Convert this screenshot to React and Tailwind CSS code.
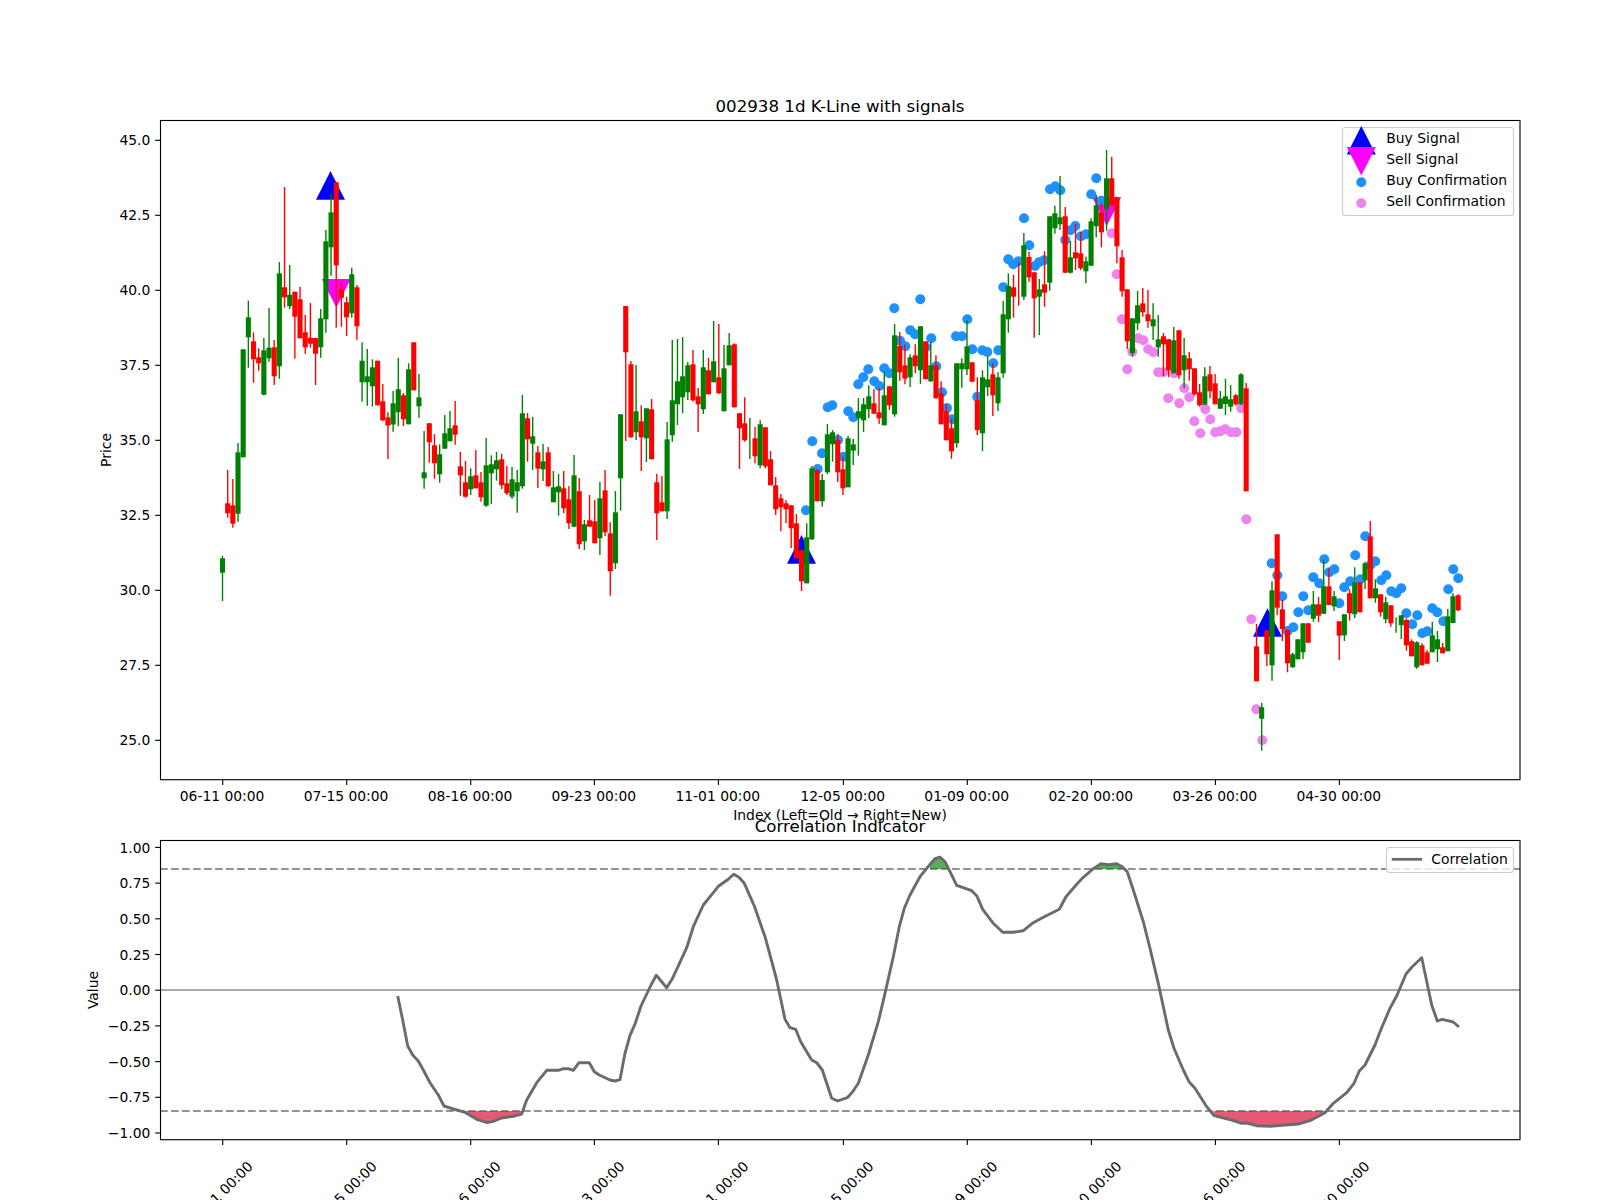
import React from "react";

const X = (i) => 222.5 + 5.17 * i;
// [green?, wickTop, bodyTop, bodyBottom, wickBottom], one row per bar
const C = [
[1,556,558.3,572.7,601],[0,470,503.3,513.3,517.7],[0,479,505.3,523.7,527.7],[1,443,452.3,513.7,521.7],[1,349.3,349.3,457.3,457.3],
[1,300.7,317.3,337.3,367.7],[0,332.3,341.3,359.3,382.7],[0,348.3,357.3,363.3,370.7],[1,338,350.3,394.7,395.3],[1,308,347.7,358.3,361.7],
[0,340,347.3,376.3,385],[1,262,273.3,366.3,378.7],[0,187,287.3,297.3,307.7],[1,265,294.7,306.3,309],[0,291.7,291.7,316.7,358.7],
[0,286.7,299.3,338.3,338.3],[0,315,332.3,347.3,353.7],[0,303,337.7,343.7,347.7],[0,338,338,353.7,385],[1,309,318.3,347.3,357.7],
[1,230,241.3,319.3,332.7],[1,194,212.3,247.3,275.7],[0,182,182.3,265.3,327.7],[0,281.7,289.3,297.7,326.7],[0,296.7,302.3,317.3,336],
[1,267.7,274.3,313.3,317.7],[0,285,287.3,326.3,339.7],[1,342.3,360.7,382.3,401.7],[1,349,376.3,382.3,405.7],[1,359.3,367.3,386.3,406.7],
[0,360.7,360.7,405.3,405.3],[0,384,401.3,420.3,421],[0,412.3,417.3,425.5,459],[1,391,403.3,424.5,431.8],[1,357.7,389.3,412.3,426],
[0,393,395.3,419.3,426],[1,363.3,369.3,424.3,424.3],[0,342.3,342.3,390.3,390.3],[1,374,397.3,406.3,417.7],[1,431,472.3,478.3,488.7],
[0,423,423.3,442.3,462.7],[0,434,445.3,463.3,478.7],[1,444.3,454.3,474.3,482.7],[1,415,433.3,448.7,448.7],[1,411,428.3,441.3,441.3],
[0,401,425.3,434.7,444.7],[0,452,466.3,475.3,495.7],[0,461,482.3,496.7,497.7],[1,468.3,476.3,489.3,495],[0,450,475.3,488.3,488.3],
[0,472,482.3,497.3,501.7],[1,438,465.3,505.7,506.7],[1,455.3,464.3,473.3,504],[1,452,460.3,469.3,480.7],[0,453.7,459.3,485.3,489],
[0,466,483.3,493.3,495],[1,467,479.3,496.7,499],[1,470,482.3,491.3,512.7],[1,395,413.3,486.3,488.7],[0,413,418.3,439.3,461.7],
[1,417,436.3,443.7,470],[0,446,452.3,468.7,488],[1,444,461.3,469.3,481],[0,447,452.3,486.3,486.7],[1,471,487.3,502.3,502.3],
[1,474,486.3,492.3,515.7],[0,471,488.3,508.3,513.3],[0,486,499.3,523.3,529],[1,455,475.3,526.7,527.3],[0,478,491.3,544.3,549],
[1,520,524.3,541.3,550],[0,495,520.3,526.7,526.7],[0,500,521.3,543.3,543.3],[1,482,498.3,538.3,555],[0,470,490.3,532.3,536],
[0,522.3,533.3,571.3,595.7],[1,491,512.3,563.3,569],[1,414.3,414.3,478.3,510.7],[0,306,306,352.3,441],[0,361,364.3,437.3,437.7],
[1,365,411.3,432.3,440],[0,405.3,421.3,437.3,471],[1,408.3,408.3,438.3,462],[0,399,409.3,459.3,459.3],[0,474,482.3,513.3,540],
[0,476,502.3,511.3,511.3],[1,422,439.3,511.3,519],[1,340,400.3,435.3,441.7],[1,339,381.3,404.3,425],[1,337,376.3,397.3,413.3],
[1,362,365.3,392.3,400],[0,350,364.3,400.3,401.7],[0,388,396.3,404.3,432],[1,350,367.3,409.3,414],[0,358,370.3,394.3,394.3],
[1,321,361.3,382.3,382.3],[0,324,377.3,393.3,394],[1,345,368.3,411.3,411.3],[1,333,345.3,365.3,365.3],[0,343.3,344.3,407.3,407.3],
[0,413,413.3,428.3,469],[0,397.3,423.3,440.3,441.7],[1,418,450,450,459],[0,427,438.3,456.3,463.3],[1,420.3,424.3,465.3,468.3],
[0,427.3,427.3,466.3,468.3],[0,451,459.3,485.3,485.3],[0,477,485.3,509.3,515],[0,494,498.3,507.3,531.3],[0,500.3,503.3,509.3,523.3],
[0,505.3,505.3,528.3,548],[0,514,523.3,558.3,558.3],[0,550.3,550.3,581.3,591],[1,523.3,537.3,583.3,583.3],[1,466,468.3,539.3,540],
[0,468.7,470,501.3,501.3],[1,474,480,501.3,506.7],[1,424,434.3,472.3,474],[1,430,432.3,444.3,461.7],[0,434,440,472.3,482],
[0,456.7,469.3,488.3,495],[1,436,438.3,487.3,487.3],[1,439,444.3,450.7,465],[1,398,411.3,418.3,455.7],[1,398,404.3,420.3,432],
[1,385.3,396.3,409.3,418],[0,389.3,403.3,413.7,413.7],[0,388,412.3,418.3,424],[1,371.3,395.3,425.3,425.3],[0,386.3,386.3,405.3,410],
[1,324,335.3,414.3,416.7],[0,332,346,372.3,381],[0,344.3,365.3,378.7,384.3],[1,354.3,357.3,377.3,387],[0,344.3,355.3,366.3,373],
[1,326,326.3,370.3,384],[0,341.3,341.3,379.3,379.3],[1,342.3,365.3,381.3,381.7],[0,355.3,365.3,398.3,398.3],[0,381.3,393.3,424.3,424.3],
[0,404.3,411.3,440.3,440.3],[0,418.3,428.3,451.3,458.7],[1,363.3,363.3,443.3,447.7],[1,358.3,363.3,369.3,387.7],[1,320,346.3,369.3,375],
[0,362.3,362.3,381.7,381.7],[0,377.3,400.3,430,435],[1,370.3,377.3,433.3,451],[1,356.3,379.3,387.3,396],[0,363.3,374.3,395.3,416],
[1,372.3,377.3,403.3,411],[1,301,314.3,373.3,377.7],[1,273.3,286,319.3,332.7],[0,274.7,287.3,296.7,317.7],[0,262,290,290,305.7],
[1,233,245.3,296.7,300],[0,251.7,257,277.3,281.7],[0,272.3,272.3,298.3,337.7],[1,279,289.3,296.7,335],[0,251.3,284.3,292.7,306.7],
[1,216.3,216.3,282.7,290.7],[1,205.7,213.3,228.3,233.7],[1,176,217.3,224.3,230],[0,207,216.3,272.7,273.3],[1,241,257.3,272.7,273.7],
[0,224,252.3,258.3,270],[0,232,253.3,268.3,270],[1,256.7,261.3,271.3,283.3],[1,218.3,221.3,265.7,266],[1,195,205.3,226.3,237.3],
[0,203.3,212.3,232.3,247.3],[1,150,178.3,209.3,230.7],[0,156.7,178.3,205.3,205.3],[0,197.3,197.3,246.3,263.3],[0,250,257.3,291.3,296.7],
[0,289.3,289.3,341.3,349],[1,318.3,318.3,353.3,356.7],[1,291,305.3,323.3,330],[0,288,303.3,312.3,316.7],[0,290,314.3,321.3,327.7],
[1,303.3,319.3,326.3,340],[1,315,339.3,347.3,356.7],[0,333,336.3,344.3,376],[0,339,339.3,370.3,377.3],[1,327,340.3,373.3,373.3],
[0,330.3,330.3,375.3,378.7],[1,338,355.3,370.3,388.3],[0,352,358.3,369.3,380.7],[0,368.3,368.3,394.3,395.7],[0,384,392.3,405.3,406.7],
[1,367.3,376.3,404.7,404.7],[0,366,374.3,391.3,398.3],[0,374,383.3,404.3,404.3],[1,391,398.3,408.7,408.7],[1,379,396.3,404,415],
[1,385,399.3,406.7,411.7],[0,394,395.3,404.3,405.7],[1,373.3,374.3,404.3,405],[0,383,388.3,491.3,491.3],null,
[0,624,646.3,681.3,681.3],[1,703,707.3,718.7,750.7],[0,630.3,630.3,654.3,666],[1,581.3,590.3,665.3,680.7],[0,534.3,534.3,607.7,615],
[0,600,609.3,629,641],[0,629.3,630,663.3,672.3],[1,653,654.3,667.3,667.7],[1,639.3,639.3,659.3,659.3],[1,623.3,623.3,652.3,659],
[0,623.3,623.3,642.7,642.7],[1,591,604.3,618.7,621.7],[0,597,604.3,615.7,622],[1,560,586.3,613.7,614],[0,568.3,586.3,605,605],
[1,591,596.3,606.3,611],[0,621.3,621.3,635.7,660],[1,614.3,614.3,635.3,641],[0,589,593.3,613.3,620.7],[1,567.3,582.3,614.3,618],
[0,582.3,582.3,612.3,612.3],[1,561.7,563.3,580.3,589],[0,521,536.3,598.3,598.3],[1,579.3,588.3,598.3,602.7],[0,594.3,594.3,612.3,616.7],
[1,597,602.3,619.3,623.3],[0,605.3,605.3,623.3,626.7],[1,617.3,625,625,632.7],[1,615.3,615.3,625.3,639],[0,618.3,620,645.3,650.7],
[0,639.3,641.3,656.3,656.3],[1,641.3,642.3,667.3,668.7],[0,643.3,645.3,665.3,665.3],[0,650,652.3,663.7,663.7],[1,622,635.3,652.3,652.3],
[1,631,639.3,649.3,662],[0,643,647.3,653.3,653.3],[1,609,616.3,651.3,651.3],[1,593.3,596.3,623,623.3],[0,594.3,595.3,610.3,611],
];
const BLUE = [[806,510.3],[812.3,441.3],[817.7,469],[822,453.3],[827.7,407.3],[832.3,405.3],[838,440],[843.3,456.7],[848.3,411.3],[853.3,417.3],[858.3,384.3],[863.3,377.3],[868.3,369.3],[874.3,381.3],[879.3,386],[884.3,368.3],[889.3,373.3],[894.3,308.3],[900,340.7],[905.3,346.3],[910.3,330.3],[915,334.3],[920.3,299.3],[925.7,347.3],[931.3,338.3],[936.3,366.3],[942,392.3],[947,408],[952,419.3],[956,336.3],[962,336.3],[967.3,319.3],[972.3,349.3],[977.3,396.7],[982.3,350.3],[987.3,352],[993.3,363.3],[998.3,350.3],[1003.3,287.3],[1008.3,259.3],[1013.3,264.3],[1018.3,261.3],[1024,218.3],[1029.3,245.3],[1035,266],[1039,262.3],[1044,260.3],[1050,189.3],[1055.3,186.3],[1060.3,190.3],[1065.3,240],[1070.3,230.3],[1075.3,226],[1081,236.3],[1086,234.3],[1091.3,194.3],[1096.3,178.3],[1101.3,200.7],[1271.7,563.3],[1277.3,575.3],[1282.3,596.3],[1287.7,631],[1293.3,627.3],[1298.3,612.3],[1303.3,596.3],[1308.3,610.3],[1313.3,577.3],[1319.3,583.3],[1324.3,559.3],[1329.3,572.3],[1334.3,569.3],[1339.3,603.3],[1344.3,587.3],[1350.3,581.3],[1355.3,555.3],[1360.3,579.3],[1365.3,536.3],[1370.3,565.3],[1375.3,561.3],[1381.3,580.3],[1386.3,575.3],[1391.3,591.3],[1396.3,593.3],[1401.3,588.3],[1406.3,613.3],[1412.3,624.3],[1417.3,615.3],[1422.3,633.3],[1427.3,631.3],[1432.3,608.3],[1437.3,612.3],[1443.3,621.3],[1448.3,589.3],[1453.3,569.3],[1458.3,578.3]];
const VIOLET = [[1111.7,233.3],[1116.7,274.3],[1122,319.3],[1127.3,369.3],[1132.3,351.7],[1138,338.3],[1143.3,340.3],[1148.3,349.3],[1153.3,352.3],[1158.3,372.3],[1163.3,372.3],[1168.3,398.3],[1174.3,373.3],[1179.3,403.3],[1184.3,388.3],[1189.3,397.3],[1194.3,421.3],[1200.3,433.3],[1205.3,409.3],[1210.3,419.3],[1215.3,432.3],[1220.3,431.3],[1225.3,429.3],[1231.3,432.3],[1236.3,432.3],[1241.3,408.3],[1246.3,519.3],[1251.3,619.3],[1256.3,709.3],[1262.3,740.3]];

const LINE7 = [[953,678],[968,750],[983,828],[998,855],[1015,873],[1030,900],[1050,938],[1075,975],[1092,1008],[1120,1017],[1155,1027],[1190,1048],[1222,1058],[1240,1054],[1265,1044],[1300,1039],[1325,1032],[1340,990],[1370,938],[1400,901],[1435,901],[1450,896],[1465,896],[1480,901],[1497,878]];
const LINE8 = [[88,878],[103,905],[118,915],[150,930],[165,933],[180,929],[195,850],[210,796],[225,762],[243,708],[273,645],[289,616],[320,653],[336,628],[350,598],[380,533],[400,470],[430,405],[460,368],[475,349],[505,328],[521,313],[537,322],[553,340],[583,408],[615,500],[630,555],[650,630],[675,748],[690,773],[707,778],[722,815],[755,870],[770,878],[787,900],[815,985],[833,993],[862,983],[878,965],[895,940],[925,855],[955,755],[975,670],[1000,560],[1018,470],[1033,415],[1050,375],[1080,320],[1110,283],[1125,266],[1140,261],[1155,275],[1170,305],[1190,346],[1235,362],[1250,377],[1268,418],[1298,458],[1328,487],[1360,487],[1390,482],[1420,458],[1450,442],[1498,418]];
const LINE9 = [[78,380],[110,343],[130,322],[160,296],[183,281],[205,284],[230,281],[247,290],[262,305],[280,360],[310,455],[330,535],[355,640],[385,780],[402,835],[430,900],[447,935],[465,955],[500,1010],[522,1037],[575,1050],[605,1060],[620,1059],[650,1067],[690,1069],[745,1064],[775,1062],[810,1052],[855,1028],[880,1000],[920,968],[942,940],[958,903],[975,885],[1005,825],[1022,780],[1050,715],[1070,678],[1098,612],[1115,592],[1145,563],[1175,705],[1192,753],[1207,748],[1240,756],[1257,771]];
const at = (ox, pts) => pts.map(([x, y]) => `${(ox + x / 3).toFixed(1)},${(770 + y / 3).toFixed(1)}`).join(" ");
const LINE = [at(80, LINE7), at(560, LINE8), at(1040, LINE9)].join(" ");
const RED1 = at(80, [[1150,1023],[1155,1027],[1190,1048],[1222,1058],[1240,1054],[1265,1044],[1300,1039],[1325,1032],[1328,1023]]);
const RED2 = at(1040, [[520,1023],[522,1037],[575,1050],[605,1060],[620,1059],[650,1067],[690,1069],[745,1064],[775,1062],[810,1052],[855,1028],[860,1023]]);
const GREEN1 = at(560, [[1110,297],[1110,283],[1125,266],[1140,261],[1155,275],[1162,297]]);
const GREEN2 = at(1040, [[165,297],[183,281],[205,284],[230,281],[247,290],[252,297]]);

const TICKS = [[222.7,"06-11 00:00"],[346.7,"07-15 00:00"],[470.7,"08-16 00:00"],[594.4,"09-23 00:00"],[718.4,"11-01 00:00"],[843.4,"12-05 00:00"],[967.3,"01-09 00:00"],[1091.4,"02-20 00:00"],[1215.4,"03-26 00:00"],[1339.4,"04-30 00:00"]];
const PRICE = ["45.0","42.5","40.0","37.5","35.0","32.5","30.0","27.5","25.0"];
const VALUE = ["1.00","0.75","0.50","0.25","0.00","−0.25","−0.50","−0.75","−1.00"];

const Up = ({ x, y }) => <polygon points={`${x - 14.5},${y + 14.3} ${x + 14.5},${y + 14.3} ${x},${y - 14.3}`} fill="#0000ff" />;
const Down = ({ x, y }) => <polygon points={`${x - 14.5},${y - 14.3} ${x + 14.5},${y - 14.3} ${x},${y + 14.3}`} fill="#ff00ff" />;

function XAxisTicks({ y }) {
  return TICKS.map(([x]) => <line key={x} x1={x} x2={x} y1={y} y2={y + 4.9} stroke="#000" strokeWidth="1.11" />);
}

export default function App() {
  return (
    <div className="w-[1600px] h-[1200px] overflow-hidden bg-white">
      <svg width="1600" height="1200" viewBox="0 0 1600 1200" className="block font-['DejaVu_Sans',sans-serif] text-[13.89px]" fill="#000">
        {/* price panel */}
        <text x="840" y="112" textAnchor="middle" className="text-[16.67px]">002938 1d K-Line with signals</text>
        <Up x={330.5} y={185.4} />
        <Down x={336.3} y={293.2} />
        <Up x={801.5} y={549.4} />
        <Down x={1106.7} y={211.6} />
        <Up x={1267.5} y={622.5} />
        {BLUE.map(([x, y], i) => <circle key={i} cx={x} cy={y} r="5" fill="#1e90ff" />)}
        {VIOLET.map(([x, y], i) => <circle key={i} cx={x} cy={y} r="5" fill="#ee82ee" />)}
        {C.map((c, i) => {
          if (!c) return null;
          const col = c[0] ? "#008000" : "#ff0000";
          const x = X(i);
          return (
            <g key={i}>
              <line x1={x} x2={x} y1={c[1]} y2={c[4]} stroke={col} strokeWidth="1.39" />
              {c[3] > c[2] && <rect x={x - 2.55} y={c[2]} width="5.1" height={c[3] - c[2]} fill={col} />}
            </g>
          );
        })}
        <rect x="160.5" y="120.5" width="1359.5" height="659.2" fill="none" stroke="#000" strokeWidth="1.11" />
        {PRICE.map((p, i) => {
          const y = 140.3 + i * 75;
          return (
            <g key={p}>
              <line x1="155.2" x2="160" y1={y} y2={y} stroke="#000" strokeWidth="1.11" />
              <text x="150.3" y={y + 5.1} textAnchor="end">{p}</text>
            </g>
          );
        })}
        <XAxisTicks y={780} />
        {TICKS.map(([x, t]) => <text key={t} x={x - 0.6} y="801" textAnchor="middle">{t}</text>)}
        <text x="0" y="0" textAnchor="middle" transform="translate(111 450) rotate(-90)">Price</text>
        <text x="840" y="820" textAnchor="middle">Index (Left=Old → Right=New)</text>

        {/* legend */}
        <rect x="1342.5" y="127.5" width="171" height="88" rx="3" fill="#fff" fillOpacity="0.8" stroke="#cccccc" strokeWidth="1.11" />
        <Up x={1361.3} y={140.3} />
        <Down x={1361.3} y={161.3} />
        <circle cx="1361.3" cy="182.3" r="5" fill="#1e90ff" />
        <circle cx="1361.3" cy="203.3" r="5" fill="#ee82ee" />
        <text x="1386.3" y="143.3">Buy Signal</text>
        <text x="1386.3" y="164.3">Sell Signal</text>
        <text x="1386.3" y="185.3">Buy Confirmation</text>
        <text x="1386.3" y="206.3">Sell Confirmation</text>

        {/* correlation panel */}
        <text x="840" y="832" textAnchor="middle" className="text-[16.67px]">Correlation Indicator</text>
        <line x1="160" x2="1520" y1="869" y2="869" stroke="#808080" strokeOpacity="0.85" strokeWidth="2.2" strokeDasharray="7.7 3.3" />
        <line x1="160" x2="1520" y1="1111" y2="1111" stroke="#808080" strokeOpacity="0.85" strokeWidth="2.2" strokeDasharray="7.7 3.3" />
        <line x1="160" x2="1520" y1="990" y2="990" stroke="#a9a9a9" strokeWidth="2.2" />
        <polygon points={RED1} fill="#dc143c" fillOpacity="0.7" />
        <polygon points={RED2} fill="#dc143c" fillOpacity="0.7" />
        <polygon points={GREEN1} fill="#008000" fillOpacity="0.65" />
        <polygon points={GREEN2} fill="#008000" fillOpacity="0.65" />
        <polyline points={LINE} fill="none" stroke="#6b6b6b" strokeWidth="2.9" strokeLinejoin="round" />
        <rect x="160.5" y="840.5" width="1359.5" height="299.2" fill="none" stroke="#000" strokeWidth="1.11" />
        {VALUE.map((p, i) => {
          const y = 847.4 + i * 35.7;
          return (
            <g key={p}>
              <line x1="155.2" x2="160" y1={y} y2={y} stroke="#000" strokeWidth="1.11" />
              <text x="150.3" y={y + 5.1} textAnchor="end">{p}</text>
            </g>
          );
        })}
        <XAxisTicks y={1140} />
        {TICKS.map(([x, t]) => (
          <text key={t} x="0" y="5" textAnchor="middle" transform={`translate(${x - 2.4} 1193.7) rotate(-45)`}>{t}</text>
        ))}
        <text x="0" y="0" textAnchor="middle" transform="translate(98 990) rotate(-90)">Value</text>
        <rect x="1386.5" y="847.5" width="127" height="25" rx="3" fill="#fff" fillOpacity="0.8" stroke="#cccccc" strokeWidth="1.11" />
        <line x1="1391.7" x2="1422" y1="859.3" y2="859.3" stroke="#6b6b6b" strokeWidth="2.78" />
        <text x="1431.3" y="864.3">Correlation</text>
      </svg>
    </div>
  );
}
